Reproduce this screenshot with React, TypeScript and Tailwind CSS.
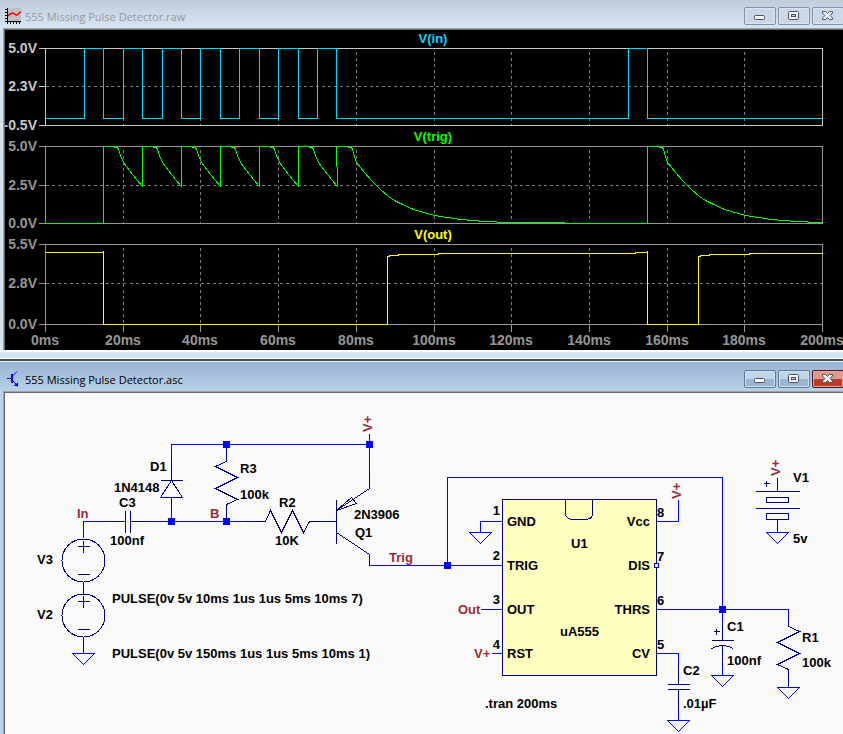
import React from 'react';

interface Point {
  x: number;
  y: number;
}

interface Panel {
  name: string;
  color: string;
  frame: string;
  top: number;
  mid: number;
  bottom: number;
  labels: [string, string, string];
  trace: Point[];
}

const LEFT = 45;
const RIGHT = 822;

// time in ms -> x on the plot
const tx = (ms: number) => Math.round(LEFT + ms * 3.885 + 0.01);

const times = [0, 20, 40, 60, 80, 100, 120, 140, 160, 180, 200];

const toPoints = (pts: Point[]) => pts.map(p => `${p.x},${p.y}`).join(' ');

const at = (pairs: number[][], dx = 0): Point[] => pairs.map(([x, y]) => ({ x: x + dx, y }));

const buildInput = (): Point[] => {
  const pts = at([[LEFT, 118]]);
  [10, 20, 30, 40, 50, 60, 70, 150].forEach(ms => {
    const a = tx(ms);
    const b = tx(ms + 5);
    pts.push(...at([[a, 118], [a, 48], [b, 48], [b, 118]]));
  });
  pts.push({ x: RIGHT, y: 118 });
  return pts;
};

const shortDecay = [[0, 146], [7, 146], [14, 147], [15, 149], [17, 155], [20, 162], [26, 170], [33, 179], [39, 186]];
const longDecay = [
  [0, 146], [8, 146], [15, 147], [16, 149], [18, 156], [20, 162], [28, 172], [36, 181], [44, 189], [52, 196],
  [58, 200], [64, 203], [77, 209], [98, 215], [124, 219], [149, 221], [171, 222],
];

const buildTrigger = (): Point[] => {
  const pts = at([[LEFT, 223], [tx(15), 223]]);
  [15, 25, 35, 45, 55, 65].forEach(ms => pts.push(...at(shortDecay, tx(ms))));
  pts.push(...at(longDecay, tx(75)));
  pts.push(...at([[564, 222], [565, 223], [tx(155), 223]]));
  pts.push(...at(longDecay, tx(155)));
  pts.push({ x: RIGHT, y: 222 });
  return pts;
};

const output = at([
  [45, 252], [103, 252], [103, 250], [103, 324], [387, 324], [387, 256], [389, 256], [389, 255], [398, 255],
  [398, 254], [438, 254], [438, 253], [635, 253], [635, 252], [647, 252], [647, 250], [647, 324], [698, 324],
  [698, 256], [700, 256], [700, 255], [709, 255], [709, 254], [749, 254], [749, 253], [822, 253],
]);

const panels: Panel[] = [
  { name: 'V(in)', color: '#00d7ff', frame: '#c8c8c8', top: 48, mid: 86, bottom: 125, labels: ['5.0V', '2.3V', '-0.5V'], trace: buildInput() },
  { name: 'V(trig)', color: '#00ff00', frame: '#969696', top: 146, mid: 185, bottom: 223, labels: ['5.0V', '2.5V', '0.0V'], trace: buildTrigger() },
  { name: 'V(out)', color: '#ffff00', frame: '#969696', top: 244, mid: 283, bottom: 324, labels: ['5.5V', '2.8V', '0.0V'], trace: output },
];

const PlotPanel: React.FC<{ panel: Panel }> = ({ panel }) => {
  const { name, color, frame, top, mid, bottom, labels, trace } = panel;
  return (
    <g>
      <g transform="translate(0.5 0.5)" fill="none" shapeRendering="crispEdges">
        <g stroke="#808080" strokeDasharray="3 3">
          <path d={`M${LEFT} ${mid}H${RIGHT}`} />
          {times.slice(1, -1).map(t => (
            <path key={t} d={`M${tx(t)} ${top + 3}V${bottom}`} />
          ))}
        </g>
        <path stroke={frame} d={`M${LEFT} ${top}H${RIGHT}V${bottom}H${LEFT}Z M38 ${top}h7 M38 ${mid}h7 M38 ${bottom}h7`} />
        <polyline stroke={color} points={toPoints(trace)} />
      </g>
      <text x="433" y={top - 5} fill={color} textAnchor="middle" fontSize="13">{name}</text>
      <g fill={frame} textAnchor="end" fontSize="14">
        <text x="37" y={top + 5}>{labels[0]}</text>
        <text x="37" y={mid + 5}>{labels[1]}</text>
        <text x="37" y={bottom + 5}>{labels[2]}</text>
      </g>
    </g>
  );
};

const Waveforms: React.FC = () => (
  <svg viewBox="5 30 838 320" className="block w-full bg-black font-['Liberation_Sans',sans-serif] font-bold">
    {panels.map(p => (
      <PlotPanel key={p.name} panel={p} />
    ))}
    <g transform="translate(0.5 0.5)" stroke="#969696" shapeRendering="crispEdges">
      {times.map(t => (
        <path key={t} d={`M${tx(t)} 324v7`} />
      ))}
    </g>
    <g fill="#969696" textAnchor="middle" fontSize="14">
      {times.map(t => (
        <text key={t} x={tx(t)} y="345">{t}ms</text>
      ))}
    </g>
  </svg>
);

const Ground: React.FC<Point> = ({ x, y }) => <path stroke="#0000ff" d={`M${x - 11} ${y}h22l-11 11z`} />;

const Junction: React.FC<Point> = ({ x, y }) => <rect x={x - 3} y={y - 3} width="7" height="7" fill="#0000ff" />;

const Source: React.FC<Point> = ({ x, y }) => (
  <g>
    <circle cx={x} cy={y} r="21.5" />
    <path d={`M${x - 6} ${y - 14}h12 M${x} ${y - 20}v12 M${x - 6} ${y + 14}h12`} />
  </g>
);

const parts: [number, number, string][] = [
  [150, 471, 'D1'],
  [114, 492, '1N4148'],
  [119, 507, 'C3'],
  [110, 545, '100nf'],
  [240, 473, 'R3'],
  [240, 499, '100k'],
  [279, 507, 'R2'],
  [275, 545, '10K'],
  [354, 519, '2N3906'],
  [355, 537, 'Q1'],
  [37, 564, 'V3'],
  [37, 619, 'V2'],
  [112, 603, 'PULSE(0v 5v 10ms 1us 1us 5ms 10ms 7)'],
  [112, 658, 'PULSE(0v 5v 150ms 1us 1us 5ms 10ms 1)'],
  [485, 708, '.tran 200ms'],
  [507, 526, 'GND'],
  [507, 570, 'TRIG'],
  [507, 614, 'OUT'],
  [507, 658, 'RST'],
  [571, 548, 'U1'],
  [560, 636, 'uA555'],
  [657, 517, '8'],
  [657, 561, '7'],
  [657, 605, '6'],
  [657, 649, '5'],
  [793, 482, 'V1'],
  [793, 543, '5v'],
  [727, 631, 'C1'],
  [727, 665, '100nf'],
  [683, 675, 'C2'],
  [683, 708, '.01µF'],
  [802, 642, 'R1'],
  [802, 667, '100k'],
];

const rightAligned: [number, number, string][] = [
  [500, 515, '1'],
  [500, 560, '2'],
  [500, 604, '3'],
  [500, 649, '4'],
  [650, 526, 'Vcc'],
  [650, 570, 'DIS'],
  [650, 614, 'THRS'],
  [650, 658, 'CV'],
];

const Schematic: React.FC = () => (
  <svg viewBox="5 393 838 341" className="block w-full bg-[#fafafa] font-['Liberation_Sans',sans-serif] font-bold">
    <g transform="translate(0.5 0.5)" fill="none" stroke="#000080" shapeRendering="crispEdges">
      {/* wires */}
      <g stroke="#0000ff">
        <path d="M83 537V521H106 M149 521H242 M171 506V521 M171 460V444H369 M369 433V471" />
        <path d="M369 565H502 M447 565V477H722V609 M502 521H480V532 M480 609H502 M491 653H502" />
        <path d="M656 521H678V499 M656 609H788V620 M722 609V620 M656 653H678V664" />
        <path d="M678 709V720 M788 677V687" />
      </g>

      {/* C3 */}
      <path d="M106 521H125 M125 510V532 M130 510V532 M130 521H149" />
      {/* D1 */}
      <path d="M171 460V480 M171 497V506 M160 480H182 M171 480L160 497H182Z" />
      {/* R3 */}
      <path d="M226 444V461L215 466L237 477L215 488L237 499L226 504V521" />
      {/* R2 */}
      <path d="M242 521H265L270 510L281 532L292 510L303 532L309 521H336" />
      {/* Q1 */}
      <path d="M336 499V543 M369 471V488L336 510L351 497L356 503L336 510 M336 532L369 554V565" />
      {/* V3, V2 */}
      <Source x={83} y={560} />
      <Source x={83} y={615} />
      <path d="M83 581V593 M83 636V653" />

      {/* U1 */}
      <path fill="#ffffc0" d="M502 499H656V675H502Z" />
      <path d="M565 499V513C565 517 569 519 574 519H584C589 519 592 517 592 513V499" />
      <path stroke="#0000ff" fill="#fff" d="M654 563h4v4h-4z" />

      {/* C2 */}
      <path d="M678 664V684 M667 684H689 M667 689H689 M678 689V709" />
      {/* C1 */}
      <path d="M722 620V640 M711 640H733 M711 648Q722 642 733 648 M722 645V664 M713 631h6 M716 628v6" />
      {/* R1 */}
      <path d="M788 620V626L799 631L777 642L799 653L777 664L788 669V687" />
      <path stroke="#0000ff" d="M722 664V675" />

      {/* V1 */}
      <path d="M777 477V491 M755 491H799 M766 497H788V502H766Z M755 508H799 M766 513H788V519H766Z M777 519V532 M763 483h6 M766 480v6" />

      <Ground x={83} y={653} />
      <Ground x={480} y={532} />
      <Ground x={777} y={532} />
      <Ground x={722} y={675} />
      <Ground x={678} y={720} />
      <Ground x={788} y={687} />
    </g>

    <g shapeRendering="crispEdges">
      <Junction x={226} y={444} />
      <Junction x={369} y={444} />
      <Junction x={171} y={521} />
      <Junction x={226} y={521} />
      <Junction x={447} y={565} />
      <Junction x={722} y={609} />
    </g>

    <g fill="#000000" fontSize="13">
      {parts.map(([x, y, label]) => (
        <text key={`${x}-${y}`} x={x} y={y}>{label}</text>
      ))}
      <g textAnchor="end">
        {rightAligned.map(([x, y, label]) => (
          <text key={`${x}-${y}`} x={x} y={y}>{label}</text>
        ))}
      </g>
    </g>

    {/* net names */}
    <g fill="#982d38" fontSize="13">
      <text x="77" y="518">In</text>
      <text x="210" y="518">B</text>
      <text x="389" y="562">Trig</text>
      <text x="458" y="614">Out</text>
      <text x="474" y="658">V+</text>
      <text transform="translate(372 432) rotate(-90)">V+</text>
      <text transform="translate(681 499) rotate(-90)">V+</text>
      <text transform="translate(780 476) rotate(-90)">V+</text>
    </g>
  </svg>
);

const PlotIcon: React.FC = () => (
  <svg viewBox="0 0 16 16" className="mb-px size-4" shapeRendering="crispEdges">
    <rect x="2" width="14" height="14" fill="#c0c0c0" />
    <path d="M2.5 0V14 M2 13.5H16 M0 1.5H2 M0 4.5H2 M0 7.5H2 M0 10.5H2 M0 13.5H2 M2.5 14V16 M5.5 14V16 M8.5 14V16 M11.5 14V16 M14.5 14V16" stroke="#000" fill="none" />
    <path d="M3 8L5 6L8 5L11 7H12L16 3.500" stroke="#f00" strokeWidth="1.500" fill="none" shapeRendering="auto" />
  </svg>
);

const TransistorIcon: React.FC = () => (
  <svg viewBox="0 0 16 16" className="mb-px size-4" fill="none" stroke="#0000ff">
    <path d="M2 7.500H6" shapeRendering="crispEdges" />
    <path d="M7 3V12" strokeWidth="2" shapeRendering="crispEdges" />
    <path d="M7 5.500L12 0.500 M7 9L12 14" />
    <path d="M13 15.500V11.500L8.500 14.500Z" fill="#0000ff" stroke="none" />
  </svg>
);

const glyphs = {
  minimize: <rect x="3.500" y="7.500" width="10" height="4" rx="1" />,
  maximize: (
    <>
      <rect x="3.500" y="3.500" width="10" height="8" rx="1" />
      <rect x="6.500" y="6.500" width="4" height="2" fill="#b9cbe0" />
    </>
  ),
  close: <path d="M3.500 3.500H6.500L8.500 5.500L10.500 3.500H13.500V5L11 7.500L13.500 10V11.500H10.500L8.500 9.500L6.500 11.500H3.500V10L6 7.500L3.500 5Z" />,
};

const CaptionButton: React.FC<{ kind: keyof typeof glyphs; className: string }> = ({ kind, className }) => (
  <button
    type="button"
    aria-label={kind}
    className={`flex h-[18px] w-8 items-center justify-center rounded-[2px] border ${className}`}
  >
    <svg viewBox="1 0 16 16" className="size-4" fill="#f8f8f8" stroke="#4a5168">
      {glyphs[kind]}
    </svg>
  </button>
);

interface FrameProps {
  title: string;
  icon: React.ReactNode;
  active?: boolean;
  children: React.ReactNode;
}

const WindowFrame: React.FC<FrameProps> = ({ title, icon, active = false, children }) => {
  const button = active
    ? 'border-[#5f7a9d] bg-linear-to-b from-[#c1d5e9] from-50% to-[#9cb5d1] to-50% shadow-[inset_0_0_0_1px_#cfe0f1]'
    : 'border-[#8491ae] bg-[#c9d7e6] shadow-[inset_0_0_0_1px_#d9e4f0]';
  const close = active
    ? 'border-[#4d1420] bg-linear-to-b from-[#e09a8c] from-50% to-[#bf3a22] to-50% shadow-[inset_0_0_0_1px_#e8a99c]'
    : button;

  return (
    <section className={active ? 'bg-[#b9d1ea]' : 'bg-[#d7e4f2]'}>
      <header
        className={`flex items-end gap-1 overflow-hidden pb-[3px] pl-[5px] ${
          active ? 'h-[29px] bg-linear-to-b from-[#99b4d1] to-[#b9d1ea]' : 'h-7 bg-linear-to-b from-[#bfcddb] to-[#d7e4f2]'
        }`}
      >
        {icon}
        <h2 className={`flex-1 text-[11px] leading-4 font-['Open_Sans',sans-serif] ${active ? 'text-black' : 'text-[#999999]'}`}>
          {title}
        </h2>
        <div className="-mr-px flex gap-[2px]">
          <CaptionButton kind="minimize" className={button} />
          <CaptionButton kind="maximize" className={button} />
          <CaptionButton kind="close" className={close} />
        </div>
      </header>
      <div className="ml-[3px] border-t border-l border-[#a0a0a0]">
        <div className="border-t border-l border-[#696969]">{children}</div>
      </div>
    </section>
  );
};

const App: React.FC = () => (
  <main className="min-h-screen overflow-hidden bg-[#b9d1ea]">
    <WindowFrame title="555 Missing Pulse Detector.raw" icon={<PlotIcon />}>
      <Waveforms />
    </WindowFrame>
    <div className="h-[9px] border-t-2 border-b border-white bg-[#d7e4f2]" />
    <div className="h-[3px] border-t-2 border-b border-t-[#434e5a] border-b-[#e6eef7]" />
    <WindowFrame title="555 Missing Pulse Detector.asc" icon={<TransistorIcon />} active>
      <Schematic />
    </WindowFrame>
  </main>
);

export default App;
